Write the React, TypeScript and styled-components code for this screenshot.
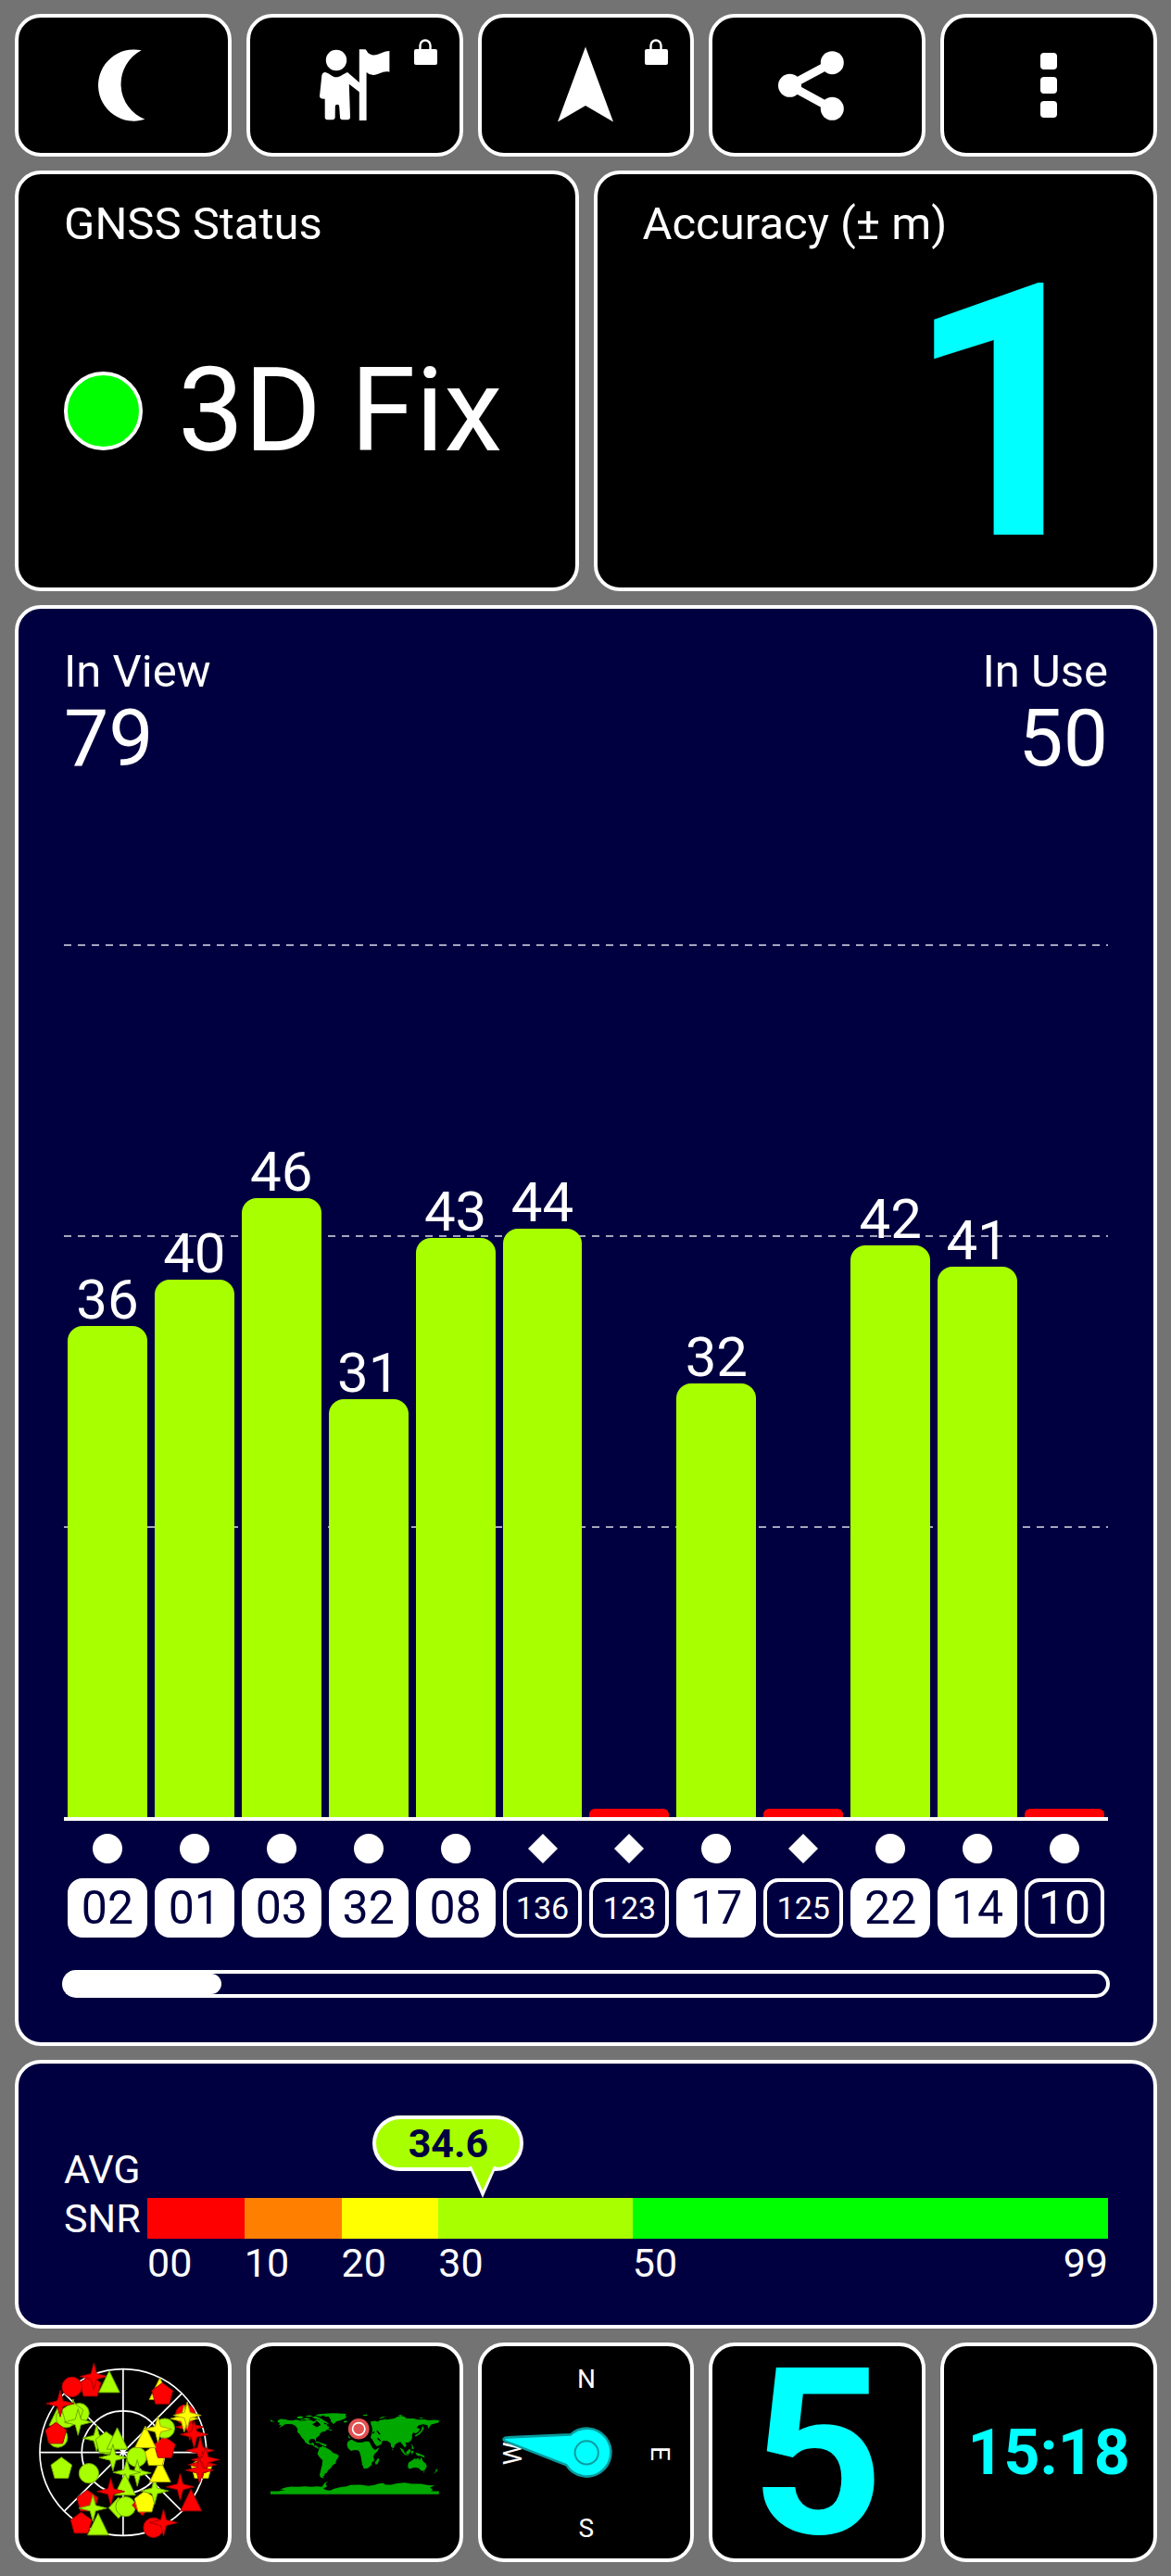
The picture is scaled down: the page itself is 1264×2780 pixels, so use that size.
import React from "react";
import styled, { createGlobalStyle } from "styled-components";

const NAVY = "#000040";
const LIME = "#a8ff00";
const CYAN = "#00ffff";

const GlobalStyle = createGlobalStyle`
  * { box-sizing: border-box; }
  body {
    margin: 0;
    background: #737373;
    color: #ffffff;
    font-family: Roboto, "Liberation Sans", sans-serif;
  }
`;

const Screen = styled.main`
  display: flex;
  flex-direction: column;
  gap: 15px;
  padding: 15px 15px 15px 16px;
`;

const ButtonRow = styled.div`
  display: grid;
  grid-template-columns: repeat(5, minmax(0, 1fr));
  gap: 16px;
`;

const Tile = styled.button`
  position: relative;
  display: flex;
  align-items: center;
  justify-content: center;
  padding: 0;
  border: 4px solid #ffffff;
  border-radius: 28px;
  background: #000000;
  color: ${CYAN};
  font-family: inherit;
  cursor: pointer;
`;

const ToolButton = styled(Tile)`
  min-height: 154px;
`;

const ToolIcon = styled.svg`
  display: block;
  width: 100px;
  height: 100px;
  fill: #ffffff;
`;

const LockBadge = styled.svg`
  position: absolute;
  top: 22px;
  right: 24px;
  width: 26px;
  height: 30px;
`;

const StatusRow = styled.div`
  display: grid;
  grid-template-columns: repeat(2, minmax(0, 1fr));
  gap: 16px;
`;

const Card = styled.section<{ $navy?: boolean }>`
  border: 4px solid #ffffff;
  border-radius: 28px;
  background: ${(p) => (p.$navy ? NAVY : "#000000")};
`;

const StatusCard = styled(Card)`
  display: flex;
  flex-direction: column;
  min-height: 454px;
  padding: 24px 49px 20px;
`;

const Label = styled.h2`
  margin: 0;
  font-size: 49px;
  font-weight: 400;
  line-height: 60px;
`;

const StatusValue = styled.div<{ $end?: boolean }>`
  display: flex;
  flex: 1;
  align-items: center;
  justify-content: ${(p) => (p.$end ? "flex-end" : "flex-start")};
  gap: 38px;
  padding-top: ${(p) => (p.$end ? 8 : 0)}px;
`;

const FixDot = styled.span`
  width: 85px;
  height: 85px;
  border: 4px solid #ffffff;
  border-radius: 50%;
  background: #00ff00;
`;

const FixText = styled.span`
  font-size: 127px;
  line-height: 150px;
`;

const AccuracyText = styled.span`
  color: ${CYAN};
  font-size: 382px;
  font-weight: 700;
  line-height: 320px;
`;

const ChartCard = styled(Card)`
  padding: 38px 49px 48px;
`;

const Stats = styled.div`
  display: flex;
  justify-content: space-between;
`;

const Stat = styled.div<{ $end?: boolean }>`
  text-align: ${(p) => (p.$end ? "right" : "left")};
`;

const StatNumber = styled.div`
  font-size: 86px;
  line-height: 84px;
`;

const Plot = styled.div`
  display: flex;
  flex-direction: column;
  height: 946px;
  margin-top: 180px;
  border-bottom: 4px solid #ffffff;
  position: relative;
`;

const GridLines = styled.div`
  position: absolute;
  inset: 0;
  display: grid;
  grid-template-rows: repeat(3, 1fr);
`;

const GridLine = styled.div`
  height: 2px;
  background: repeating-linear-gradient(90deg, #a5a5c0 0 8px, transparent 8px 15px);
`;

const Bars = styled.div`
  position: relative;
  display: grid;
  flex: 1;
  grid-template-columns: repeat(12, minmax(0, 1fr));
`;

const BarSlot = styled.div`
  display: flex;
  flex-direction: column;
  align-items: stretch;
  justify-content: flex-end;
  padding: 0 4px;
`;

const BarValue = styled.span`
  font-size: 60px;
  line-height: 56px;
  text-align: center;
`;

const Bar = styled.div<{ $used: boolean }>`
  flex: none;
  border-radius: ${(p) => (p.$used ? "16px 16px 0 0" : "6px 6px 0 0")};
  background: ${(p) => (p.$used ? LIME : "#ff0000")};
`;

const SatelliteRow = styled.div`
  display: grid;
  grid-template-columns: repeat(12, minmax(0, 1fr));
  margin-top: 14px;
`;

const Satellite = styled.div`
  display: flex;
  flex-direction: column;
  align-items: center;
  gap: 16px;
  padding: 0 4px;
`;

const SystemMark = styled.svg`
  display: block;
  width: 32px;
  height: 32px;
  fill: #ffffff;
`;

const IdPill = styled.span<{ $filled: boolean; $small: boolean }>`
  width: 100%;
  border: 4px solid #ffffff;
  border-radius: 16px;
  background: ${(p) => (p.$filled ? "#ffffff" : NAVY)};
  color: ${(p) => (p.$filled ? NAVY : "#ffffff")};
  font-size: ${(p) => (p.$small ? 34 : 50)}px;
  line-height: 56px;
  text-align: center;
`;

const ScrollTrack = styled.div`
  height: 30px;
  margin: 35px -2px 0;
  border: 4px solid #ffffff;
  border-radius: 15px;
`;

const ScrollThumb = styled.div`
  width: 15%;
  height: 100%;
  border-radius: 0 11px 11px 0;
  background: #ffffff;
`;

const SnrCard = styled(Card)`
  display: grid;
  grid-template-columns: 90px minmax(0, 1fr);
  padding: 88px 49px 41px;
`;

const SnrLabel = styled.h2`
  margin: 0;
  font-size: 43px;
  font-weight: 400;
  line-height: 53px;
`;

const Gauge = styled.div`
  position: relative;
  padding-top: 57px;
`;

const Segments = styled.div`
  display: flex;
`;

const Segment = styled.div<{ $span: number; $color: string }>`
  flex: ${(p) => p.$span} 0 0;
  height: 44px;
  background: ${(p) => p.$color};
`;

const Tick = styled.div<{ $span: number }>`
  display: flex;
  flex: ${(p) => p.$span} 0 0;
  justify-content: space-between;
  min-width: 0;
  font-size: 43px;
  line-height: 52px;
`;

const Bubble = styled.div`
  position: absolute;
  top: -32px;
  display: flex;
  flex-direction: column;
  width: 163px;
  margin-left: -119px;
`;

const BubbleText = styled.span`
  border: 4px solid #ffffff;
  border-radius: 30px;
  background: ${LIME};
  color: ${NAVY};
  font-size: 43px;
  font-weight: 700;
  line-height: 52px;
  text-align: center;
`;

const BubblePointer = styled.svg`
  display: block;
  width: 32px;
  height: 34px;
  margin: -5px 0 0 103px;
`;

const Drawing = styled.svg`
  display: block;
  width: 100%;
  height: auto;
`;

const SpeedText = styled.span`
  padding-top: 5px;
  font-size: 250px;
  font-weight: 700;
  line-height: 224px;
`;

const ClockText = styled.span`
  font-size: 68px;
  font-weight: 700;
`;

type Sat = { id: string; snr?: number; level: number; used: boolean; mark: "circle" | "diamond" };

const satellites: Sat[] = [
  { id: "02", snr: 36, level: 56.3, used: true, mark: "circle" },
  { id: "01", snr: 40, level: 61.6, used: true, mark: "circle" },
  { id: "03", snr: 46, level: 70.9, used: true, mark: "circle" },
  { id: "32", snr: 31, level: 47.9, used: true, mark: "circle" },
  { id: "08", snr: 43, level: 66.4, used: true, mark: "circle" },
  { id: "136", snr: 44, level: 67.4, used: false, mark: "diamond" },
  { id: "123", level: 1, used: false, mark: "diamond" },
  { id: "17", snr: 32, level: 49.7, used: true, mark: "circle" },
  { id: "125", level: 1, used: false, mark: "diamond" },
  { id: "22", snr: 42, level: 65.5, used: true, mark: "circle" },
  { id: "14", snr: 41, level: 63.1, used: true, mark: "circle" },
  { id: "10", level: 1, used: false, mark: "circle" },
];

const snrBands = [
  { from: "00", span: 10, color: "#ff0000" },
  { from: "10", span: 10, color: "#ff8000" },
  { from: "20", span: 10, color: "#ffff00" },
  { from: "30", span: 20, color: LIME },
  { from: "50", to: "99", span: 49, color: "#00ff00" },
];

const averageSnr = 34.6;

type Kind = "star" | "tri" | "pent" | "circle" | "dia";
type Hue = "r" | "g" | "y";

const skyHues: Record<Hue, [string, string]> = {
  r: ["#ff0000", "#a80000"],
  g: [LIME, "#6ea800"],
  y: ["#ffff00", "#a8a800"],
};

const skyShapes: Record<Kind, string> = {
  star: "M0-43L9-9L45 0L9 9L0 43L-9 9L-45 0L-9-9Z",
  tri: "M0-37L34 33H-34Z",
  pent: "M0-36L34-11L22 32H-22L-34-11Z",
  circle: "M-32 0A32 32 0 1 1 32 0A32 32 0 1 1-32 0Z",
  dia: "M0-34L32 0L0 34L-32 0Z",
};

const sky: [Kind, number, number, Hue][] = [
  ["tri", 517, 204, "y"], ["pent", 525, 219, "r"],
  ["pent", 292, 194, "r"], ["circle", 232, 196, "r"], ["star", 303, 162, "r"], ["tri", 353, 181, "g"],
  ["tri", 192, 288, "g"], ["circle", 213, 296, "g"], ["star", 236, 278, "g"], ["circle", 256, 281, "g"],
  ["pent", 234, 281, "g"], ["star", 252, 310, "g"], ["star", 194, 250, "r"],
  ["circle", 186, 360, "g"], ["pent", 180, 347, "r"], ["pent", 198, 460, "g"], ["circle", 287, 476, "g"],
  ["star", 312, 362, "g"], ["circle", 346, 382, "g"], ["pent", 343, 377, "g"], ["tri", 379, 365, "g"],
  ["star", 365, 425, "g"], ["circle", 442, 423, "g"], ["star", 444, 475, "g"], ["star", 410, 473, "g"],
  ["tri", 404, 514, "g"], ["star", 358, 535, "r"], ["pent", 282, 566, "r"], ["star", 300, 589, "g"],
  ["pent", 262, 638, "r"], ["tri", 317, 643, "g"], ["dia", 383, 588, "g"], ["circle", 406, 584, "g"],
  ["dia", 460, 579, "r"], ["pent", 469, 569, "y"], ["star", 500, 533, "g"], ["tri", 518, 471, "y"],
  ["circle", 496, 652, "r"], ["star", 529, 636, "r"], ["star", 583, 520, "r"], ["tri", 618, 565, "r"],
  ["pent", 503, 418, "y"], ["pent", 533, 393, "r"], ["tri", 470, 360, "y"],
  ["circle", 533, 330, "g"], ["star", 511, 333, "y"],
  ["star", 614, 326, "r"], ["circle", 600, 286, "r"], ["star", 596, 299, "y"], ["star", 606, 288, "y"],
  ["star", 628, 350, "r"], ["star", 648, 402, "r"], ["pent", 652, 460, "y"], ["star", 655, 448, "r"],
  ["star", 665, 432, "r"], ["star", 646, 466, "r"],
];

function Lock() {
  return (
    <LockBadge viewBox="0 0 26 30" aria-hidden="true">
      <path d="M7.5 13V8a5.5 5.5 0 0 1 11 0v5" fill="none" stroke="#fff" strokeWidth="2.4" />
      <rect x="1" y="12" width="25" height="17" rx="2" fill="#fff" />
    </LockBadge>
  );
}

function SkyPlot() {
  return (
    <Drawing viewBox="0 0 226 229" aria-hidden="true">
      <g transform="scale(0.3333) translate(-59 -64)">
        <g fill="none" stroke="#fff" strokeWidth="5">
          <circle cx="398" cy="408" r="270" />
          <circle cx="398" cy="408" r="134" />
          <path d="M398 138V678M128 408H668M207 599L589 217M207 217L589 599" />
        </g>
        {sky.map(([kind, x, y, hue], i) => (
          <path
            key={i}
            d={skyShapes[kind]}
            transform={`translate(${x} ${y})`}
            fill={skyHues[hue][0]}
            stroke={skyHues[hue][1]}
            strokeWidth="3"
          />
        ))}
      </g>
    </Drawing>
  );
}

function WorldMap() {
  return (
    <Drawing viewBox="0 0 226 229" aria-hidden="true">
      <g transform="scale(0.3333) translate(-27 -64)">
        <g fill="#00a800">
          <path d="M93 302L99 306L108 307L101 309L93 308Z" />
          <path d="M117 304L126 300L142 301L150 304L164 305L176 302L190 306L206 305L222 303L234 308L246 300L250 304L258 298L264 306L268 316L276 318L278 324L286 326L280 330L286 336L276 334L270 340L262 341L254 346L252 352L246 358L240 362L241 374L236 366L228 364L219 367L217 375L222 380L230 376L234 380L234 386L242 386L246 392L254 394L246 396L236 390L228 384L216 382L206 376L202 368L194 360L188 350L180 342L181 332L174 322L164 317L150 316L140 317L132 323L120 328L128 320L119 318L124 313L116 310Z" />
          <path d="M178 294L190 290L200 294L194 298L182 298ZM196 300L210 296L222 300L212 304ZM204 290L220 288L230 291L218 294ZM226 294L240 291L252 296L262 302L276 310L284 318L272 314L262 310L256 302L240 300ZM238 287L252 284L280 282L300 281L290 286L266 288L254 292ZM186 302L196 300L200 304Z" />
          <path d="M264 288L286 284L304 281L338 283L336 290L340 294L332 300L318 305L306 308L298 316L290 310L288 302L282 292L270 292Z" />
          <path d="M330 307L338 305L343 309L336 312L330 311ZM284 334L294 334L288 339Z" />
          <path d="M238 373L248 373L258 378L264 379L274 383L274 389L262 386L250 378L240 377Z" />
          <path d="M252 393L262 388L272 392L282 398L290 403L296 410L308 414L315 419L312 426L306 434L304 444L294 450L288 460L280 466L276 474L268 478L268 484L262 486L268 492L256 490L252 482L256 466L260 450L262 434L252 424L245 414L248 404Z" />
          <path d="M343 374L352 368L366 364L378 367L384 372L394 370L414 374L418 384L424 394L432 400L446 392L440 404L430 414L426 422L430 434L422 440L420 450L408 460L396 461L390 446L388 434L386 422L382 408L378 402L366 400L354 403L344 394L341 384Z" />
          <path d="M442 426L446 432L440 446L434 448L432 440Z" />
          <path d="M418 308L432 306L440 309L450 303L462 302L470 297L466 303L484 300L494 298L504 293L516 289L528 293L534 298L556 298L570 302L592 301L606 304L622 303L639 304L639 311L626 315L614 318L604 331L602 320L588 317L574 320L566 328L578 332L572 342L564 346L556 344L552 350L552 362L548 370L540 376L530 376L534 386L528 392L522 384L514 374L506 376L496 384L492 396L484 390L482 378L470 370L456 370L452 382L438 388L430 380L423 366L418 362Z" />
          <path d="M346 350L358 352L356 362L346 362ZM392 287L404 285L408 289L396 290ZM444 300L452 294L468 291L456 297ZM504 290L514 286L522 289ZM574 296L592 295L580 299Z" />
          <path d="M586 320L590 332L584 340L576 350L564 357L560 354L572 346L582 336ZM548 380L554 386L558 398L550 396L552 390ZM512 392L522 398L530 412L544 418L528 416L518 404ZM532 408L544 396L548 404L542 414L534 414ZM548 404L558 402L552 416ZM562 408L576 412L590 418L594 427L582 421L568 418ZM486 396L490 398L488 402Z" />
          <path d="M540 442L552 434L560 428L566 430L572 426L576 434L582 424L588 438L596 444L600 454L592 467L582 468L574 460L562 457L542 462L538 454ZM588 470L593 470L590 475ZM630 462L636 464L630 472L620 480L628 470Z" />
          <path d="M93 534L118 534L140 530L124 528L142 522L160 519L182 520L204 518L226 520L244 518L260 520L268 508L280 502L272 510L276 520L264 524L272 530L286 532L300 526L318 521L340 518L352 514L384 513L410 517L430 514L444 509L458 508L466 513L486 513L500 509L528 506L550 510L580 510L600 514L626 516L610 522L620 530L612 534L639 534L639 544L93 544Z" />
        </g>
        <path d="M228 317L238 312L242 306L252 314L256 320L250 322L244 327L236 322Z" />
        <path d="M418 364L432 388M424 346L430 342M438 338L448 350M440 362L450 372" fill="none" stroke="#000" strokeWidth="4" />
        <circle cx="383" cy="336" r="40" />
        <circle cx="379" cy="332" r="34" fill="#e25252" />
        <circle cx="379" cy="332" r="20" fill="none" stroke="#fff" strokeWidth="5" />
      </g>
    </Drawing>
  );
}

function Compass() {
  return (
    <Drawing viewBox="0 0 226 229" aria-label="Compass">
      <g fill="#fff" fontFamily="Roboto, sans-serif" fontSize="28" fontWeight="400" textAnchor="middle">
        <text x="113" y="45">N</text>
        <text x="113" y="206">S</text>
        <text transform="translate(183 116) rotate(90)">E</text>
        <text transform="translate(43 116) rotate(-90)">W</text>
      </g>
      <path
        d="M28 98.5L96 95.5A26 26 0 1 1 91.5 128.5L25 102.5C22 101 24 98.5 28 98.5Z"
        fill={CYAN}
        stroke="#0a9b9e"
        strokeWidth="2.6"
      />
      <circle cx="113.3" cy="115" r="12.6" fill={CYAN} stroke="#0a9b9e" strokeWidth="2" />
    </Drawing>
  );
}

export default function App() {
  return (
    <>
      <GlobalStyle />
      <Screen>
        <ButtonRow>
          <ToolButton aria-label="Night mode">
            <ToolIcon viewBox="0 0 100 100">
              <path d="M69.7 12.3A38.6 38.6 0 1 0 73.4 86.8A41 41 0 0 1 69.7 12.3Z" />
            </ToolIcon>
          </ToolButton>
          <ToolButton aria-label="Guidance, locked">
            <ToolIcon viewBox="0 0 100 100">
              <circle cx="30" cy="23" r="11.2" />
              <path d="M54.8 11.3H61Q62 11.3 62.6 12.6Q65 17.4 70 17.4C77 17.4 80 13 87.4 13V35.7C80 34 76 39 70 39Q65 38.6 62.6 36V88H54.8V57.3L43.8 48.7L45 84Q45 87.3 42 87.3H37Q34 87.3 34 84.5L33.2 72.5Q33 70.7 31 70.7T28.8 72.5L28.7 84.5Q28.5 87.3 25.7 87.3H20.5Q17.7 87.3 17.7 84.5V64.7Q12 65 12 61.7L14.4 39Q15.5 35.4 19 36.2C24 38 26 41.3 29.9 41.3S37 38 42.1 36L54.8 47Z" />
            </ToolIcon>
            <Lock />
          </ToolButton>
          <ToolButton aria-label="Navigate, locked">
            <ToolIcon viewBox="0 0 100 100">
              <path d="M50 8.5L80 89.5L50 72L20 89.5Z" />
            </ToolIcon>
            <Lock />
          </ToolButton>
          <ToolButton aria-label="Share">
            <ToolIcon viewBox="0 0 100 100">
              <path d="M66.3 25.7L20.5 50.3L66.3 75.3" fill="none" stroke="#fff" strokeWidth="9" />
              <circle cx="20.5" cy="50.3" r="12.5" />
              <circle cx="66.3" cy="25.7" r="12.5" />
              <circle cx="66.3" cy="75.3" r="12.5" />
            </ToolIcon>
          </ToolButton>
          <ToolButton aria-label="More options">
            <ToolIcon viewBox="0 0 100 100">
              <rect x="41" y="15" width="18" height="18" rx="4" />
              <rect x="41" y="41" width="18" height="18" rx="4" />
              <rect x="41" y="67" width="18" height="18" rx="4" />
            </ToolIcon>
          </ToolButton>
        </ButtonRow>

        <StatusRow>
          <StatusCard>
            <Label>GNSS Status</Label>
            <StatusValue>
              <FixDot />
              <FixText>3D Fix</FixText>
            </StatusValue>
          </StatusCard>
          <StatusCard>
            <Label>Accuracy (± m)</Label>
            <StatusValue $end>
              <AccuracyText>1</AccuracyText>
            </StatusValue>
          </StatusCard>
        </StatusRow>

        <ChartCard $navy>
          <Stats>
            <Stat>
              <Label>In View</Label>
              <StatNumber>79</StatNumber>
            </Stat>
            <Stat $end>
              <Label>In Use</Label>
              <StatNumber>50</StatNumber>
            </Stat>
          </Stats>
          <Plot>
            <GridLines>
              <GridLine />
              <GridLine />
              <GridLine />
            </GridLines>
            <Bars>
              {satellites.map((s) => (
                <BarSlot key={s.id}>
                  {s.snr !== undefined && <BarValue>{s.snr}</BarValue>}
                  <Bar $used={s.snr !== undefined} style={{ height: `${s.level}%` }} />
                </BarSlot>
              ))}
            </Bars>
          </Plot>
          <SatelliteRow>
            {satellites.map((s) => (
              <Satellite key={s.id}>
                <SystemMark viewBox="0 0 32 32" aria-hidden="true">
                  {s.mark === "circle" ? <circle cx="16" cy="16" r="16" /> : <path d="M16 0L32 16L16 32L0 16Z" />}
                </SystemMark>
                <IdPill $filled={s.used} $small={s.id.length > 2}>
                  {s.id}
                </IdPill>
              </Satellite>
            ))}
          </SatelliteRow>
          <ScrollTrack>
            <ScrollThumb />
          </ScrollTrack>
        </ChartCard>

        <SnrCard $navy>
          <SnrLabel>
            AVG
            <br />
            SNR
          </SnrLabel>
          <Gauge>
            <Segments>
              {snrBands.map((b) => (
                <Segment key={b.from} $span={b.span} $color={b.color} />
              ))}
            </Segments>
            <Segments>
              {snrBands.map((b) => (
                <Tick key={b.from} $span={b.span}>
                  <span>{b.from}</span>
                  {b.to && <span>{b.to}</span>}
                </Tick>
              ))}
            </Segments>
            <Bubble style={{ left: `${(averageSnr / 99) * 100}%` }}>
              <BubbleText>{averageSnr}</BubbleText>
              <BubblePointer viewBox="0 0 32 34" aria-hidden="true">
                <path d="M1 0L16 34L31 0Z" fill="#fff" />
                <path d="M4 0L16 26L28 0Z" fill={LIME} />
              </BubblePointer>
            </Bubble>
          </Gauge>
        </SnrCard>

        <ButtonRow>
          <Tile aria-label="Sky view">
            <SkyPlot />
          </Tile>
          <Tile aria-label="World map">
            <WorldMap />
          </Tile>
          <Tile>
            <Compass />
          </Tile>
          <Tile>
            <SpeedText>5</SpeedText>
          </Tile>
          <Tile>
            <ClockText>15:18</ClockText>
          </Tile>
        </ButtonRow>
      </Screen>
    </>
  );
}
